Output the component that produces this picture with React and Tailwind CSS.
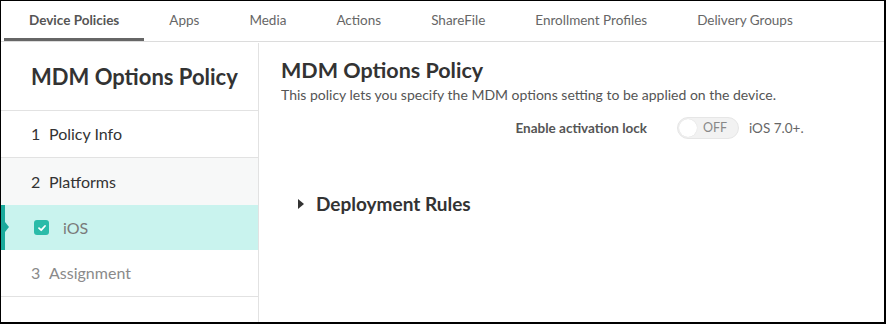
import React from "react";

const tabs = ["Device Policies", "Apps", "Media", "Actions", "ShareFile", "Enrollment Profiles", "Delivery Groups"];

export default function App() {
  return (
    <div
      className="w-[886px] h-[324px] bg-white border-t border-l border-r-2 border-b-2 border-black flex flex-col overflow-hidden"
      style={{ fontFamily: "Lato, 'Open Sans', sans-serif" }}
    >
      <div className="h-[41px] border-b border-[#dcdcdc] flex pl-[3px] shrink-0">
        {tabs.map((t, i) => (
          <div
            key={t}
            className={
              "h-[40px] px-[25px] flex items-center text-[13.5px] " +
              (i === 0 ? "font-bold text-[#555] border-b-[3px] border-[#666] pt-[2px]" : "text-[#666] pb-[1px]")
            }
          >
            {t}
          </div>
        ))}
      </div>
      <div className="flex flex-1 min-h-0">
        <div className="w-[258px] shrink-0 border-r border-[#e2e2e2] flex flex-col mt-[1px]">
          <div className="h-[68px] border-b border-[#e2e2e2] flex items-center pl-[30px] text-[22px] font-bold text-[#333]">
            MDM Options Policy
          </div>
          <div className="h-[47px] border-b border-[#e2e2e2] flex items-center pl-[30px] text-[16px] text-[#333]">
            <span className="w-[18px]">1</span>Policy Info
          </div>
          <div className="h-[48px] border-b border-[#e2e2e2] bg-[#f7f8f8] flex items-center pl-[30px] text-[16px] text-[#333]">
            <span className="w-[18px]">2</span>Platforms
          </div>
          <div className="relative h-[45px] -mt-[1px] bg-[#c9f3ee] flex items-center pl-[33px] text-[16px] text-[#7a7a7a]">
            <div className="absolute left-0 top-0 bottom-0 w-[4px] bg-[#19a99b]" />
            <div className="absolute left-[4px] top-[17px] w-0 h-0 border-y-[5px] border-y-transparent border-l-[4px] border-l-[#19a99b]" />
            <span className="w-[15px] h-[15px] rounded-[3px] bg-[#2bbba9] flex items-center justify-center mr-[14px]">
              <svg width="10" height="10" viewBox="0 0 10 10">
                <path d="M2 5.2 L4.2 7.2 L8 3" fill="none" stroke="white" strokeWidth="1.8" strokeLinecap="round" strokeLinejoin="round" />
              </svg>
            </span>
            iOS
          </div>
          <div className="h-[47px] border-b border-[#e2e2e2] flex items-center pl-[30px] text-[16px] text-[#8a8a8a]">
            <span className="w-[18px]">3</span>Assignment
          </div>
        </div>
        <div className="flex-1 pl-[22px] pt-[15px] flex flex-col">
          <div className="text-[21.5px] font-bold text-[#333] leading-[26px]">MDM Options Policy</div>
          <div className="text-[14px] text-[#555] leading-[18px] mt-[3px]">
            This policy lets you specify the MDM options setting to be applied on the device.
          </div>
          <div className="flex items-center mt-[12px] h-[24px]">
            <div className="w-[366px] text-right text-[13.5px] font-bold text-[#555]">Enable activation lock</div>
            <div className="ml-[30px] w-[62px] h-[22px] rounded-full bg-[#f2f2f2] border border-[#e6e6e6] relative flex items-center">
              <div className="absolute left-[1px] top-[1px] w-[18px] h-[18px] rounded-full bg-white shadow-[0_0_1px_rgba(0,0,0,0.15)]" />
              <span className="ml-[25px] text-[12.5px] text-[#888]">OFF</span>
            </div>
            <span className="ml-[10px] text-[13.5px] text-[#666]">iOS 7.0+.</span>
          </div>
          <div className="flex items-center mt-[50px] ml-[16px]">
            <svg width="8" height="12" viewBox="0 0 8 12" className="mr-[11px]">
              <path d="M1 1 L7 6 L1 11 Z" fill="#333" />
            </svg>
            <span className="text-[19px] font-bold text-[#333]">Deployment Rules</span>
          </div>
        </div>
      </div>
    </div>
  );
}
